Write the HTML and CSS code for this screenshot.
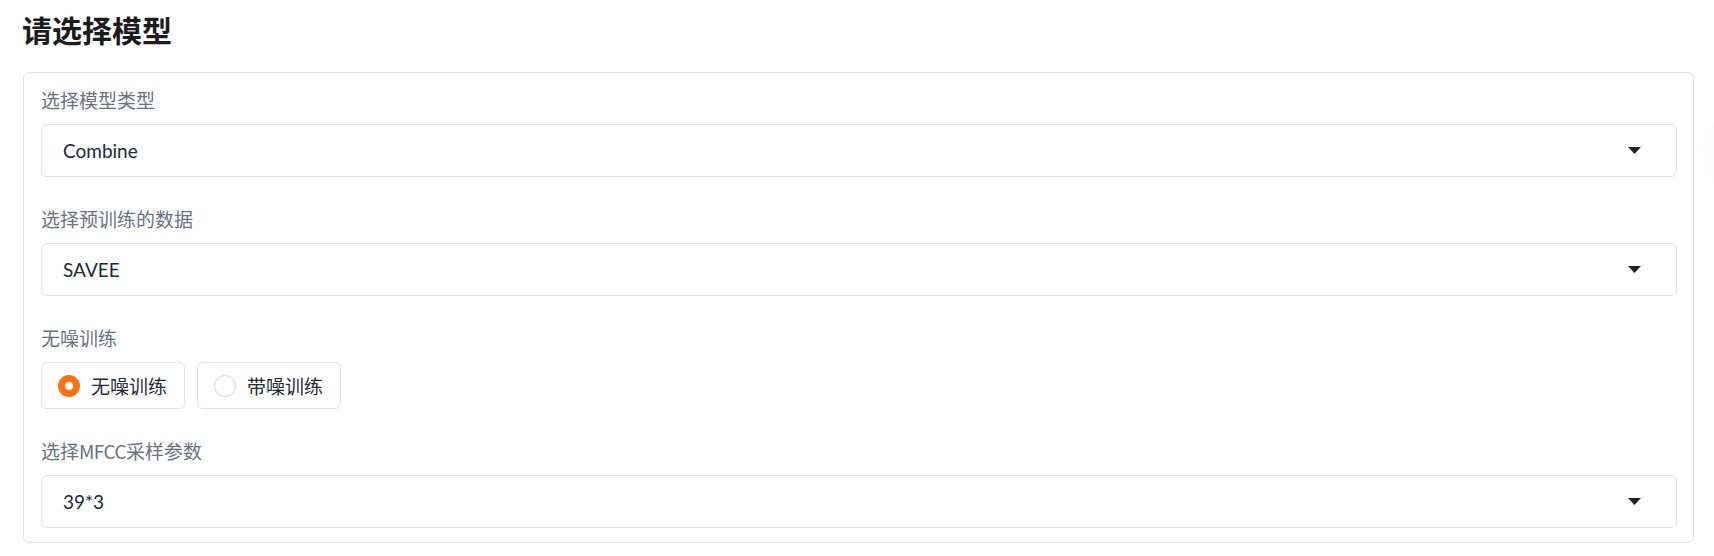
FILE: index.html
```html
<!DOCTYPE html>
<html lang="zh-CN">
<head>
<meta charset="utf-8">
<title>请选择模型</title>
<link rel="stylesheet" href="styles.css">
</head>
<body>
<div class="page">
  <h2 class="title">请选择模型</h2>
  <div class="panel">
    <div class="field">
      <div class="label">选择模型类型</div>
      <div class="dropdown">
        <span class="value">Combine</span>
        <svg class="caret" width="13" height="7" viewBox="0 0 13 7"><path d="M0 0H13L6.5 7Z" fill="#222"/></svg>
      </div>
    </div>
    <div class="field">
      <div class="label">选择预训练的数据</div>
      <div class="dropdown">
        <span class="value">SAVEE</span>
        <svg class="caret" width="13" height="7" viewBox="0 0 13 7"><path d="M0 0H13L6.5 7Z" fill="#222"/></svg>
      </div>
    </div>
    <div class="field">
      <div class="label">无噪训练</div>
      <div class="radios">
        <label class="radio"><span class="dot checked"></span><span class="rtext">无噪训练</span></label>
        <label class="radio"><span class="dot"></span><span class="rtext">带噪训练</span></label>
      </div>
    </div>
    <div class="field">
      <div class="label">选择<span class="latin">MFCC</span>采样参数</div>
      <div class="dropdown">
        <span class="value">39*3</span>
        <svg class="caret" width="13" height="7" viewBox="0 0 13 7"><path d="M0 0H13L6.5 7Z" fill="#222"/></svg>
      </div>
    </div>
  </div>
  <div class="ghost"></div>
</div>
</body>
</html>
```

FILE: styles.css
```css
* { box-sizing: border-box; }
html, body { margin: 0; padding: 0; background: #ffffff; }
body {
  font-family: "Lato", "Noto Sans CJK SC", sans-serif;
  color: #1f2937;
  overflow: hidden;
}
.page {
  position: relative;
  padding: 11px 20px 0 23px;
  height: 556px;
}
.title {
  margin: 0 0 25px -1px;
  font-family: "Noto Sans CJK SC", sans-serif;
  font-size: 30px;
  line-height: 36px;
  font-weight: 700;
  color: #1c1c1c;
}
.panel {
  border: 1px solid #e4e4e7;
  border-radius: 6px;
  padding: 14px 16px 14px 17px;
  display: flex;
  flex-direction: column;
  gap: 29px;
  background: #fff;
}
.field { display: flex; flex-direction: column; }
.label {
  font-family: "Noto Sans CJK SC", sans-serif;
  font-size: 19px;
  line-height: 26px;
  color: #6b7280;
  margin-bottom: 11px;
}
.latin {
  font-family: "Noto Sans CJK SC", sans-serif;
  letter-spacing: -0.6px;
}
.dropdown {
  height: 53px;
  border: 1px solid #e4e4e7;
  border-radius: 6px;
  display: flex;
  align-items: center;
  justify-content: space-between;
  padding: 0 35px 0 21px;
  background: #fff;
}
.value {
  font-size: 19px;
  color: #1f2937;
}
.caret { display: block; }
.radios { display: flex; gap: 12px; }
.radio {
  height: 47px;
  width: 144px;
  border: 1px solid #e4e4e7;
  border-radius: 6px;
  display: flex;
  align-items: center;
  padding: 0 0 0 16px;
  gap: 11px;
  background: #fff;
}
.dot {
  width: 22px;
  height: 22px;
  border-radius: 50%;
  border: 1px solid #d1d5db;
  background: #fff;
  flex: none;
}
.dot.checked {
  border: 7px solid #f97316;
  background: #fff;
}
.rtext {
  font-family: "Noto Sans CJK SC", sans-serif;
  font-size: 19px;
  line-height: 26px;
  color: #1f2937;
}
.ghost {
  position: absolute;
  left: 1703px;
  top: 110px;
  width: 80px;
  height: 80px;
  border-radius: 50%;
  background: #fdfdfd;
}
```
